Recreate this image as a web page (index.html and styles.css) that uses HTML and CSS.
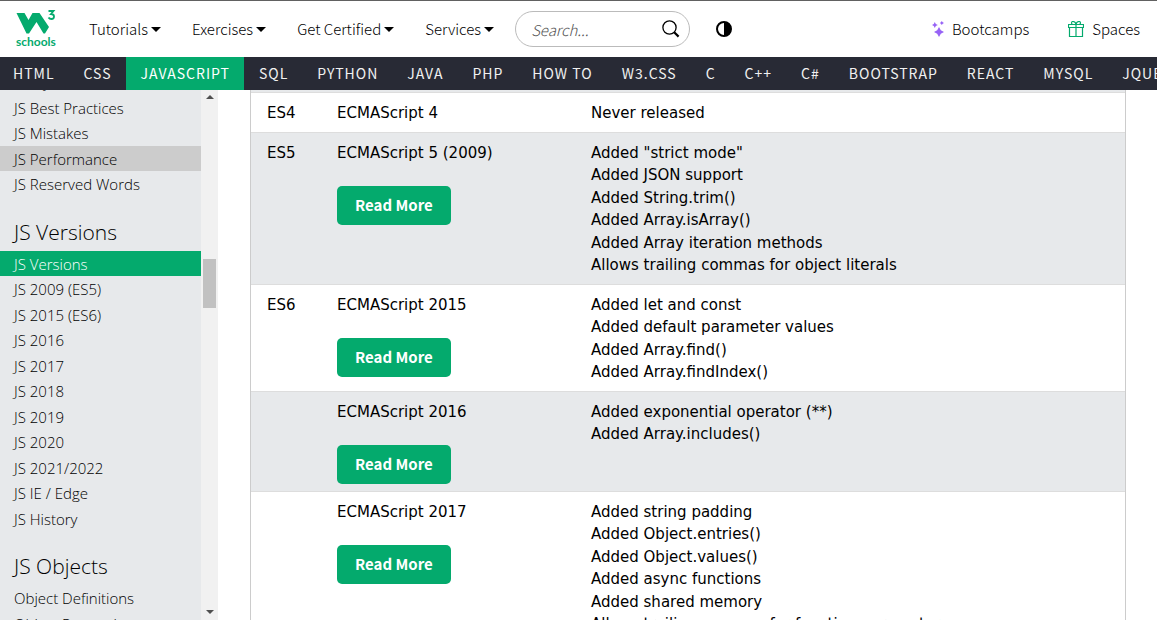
FILE: index.html
```html
<!DOCTYPE html>
<html lang="en">
<head>
<meta charset="utf-8">
<title>JavaScript Versions</title>
<link rel="stylesheet" href="styles.css">
</head>
<body>
<header class="topbar">
  <a class="logo" href="#" aria-label="W3Schools home">
    <svg width="40" height="38" viewBox="0 0 40 38" aria-hidden="true">
      <path d="M.5 3H8.500L12.500 10L16.500 3H23.500L33 17L29 23.500H27.500L20.500 12L13 23.500H10.500Z" fill="#04aa6d"/>
      <path d="M32.500 1H37.500L35 4Q38 4 38 6.500Q38 9 35.500 9Q33.500 9 32.500 7.500" fill="none" stroke="#04aa6d" stroke-width="1.8"/>
    </svg>
    <span class="logo-word">schools</span>
  </a>
  <nav class="menu" aria-label="Main">
    <a href="#">Tutorials<i class="caret"></i></a>
    <a href="#">Exercises<i class="caret"></i></a>
    <a href="#">Get Certified<i class="caret"></i></a>
    <a href="#">Services<i class="caret"></i></a>
  </nav>
  <form class="search">
    <input type="text" placeholder="Search..." aria-label="Search">
    <button type="button" aria-label="Search">
      <svg width="18" height="18" viewBox="0 0 18 18"><circle cx="7.5" cy="7.5" r="6.6" fill="none" stroke="#000" stroke-width="1.3"/><path d="M12.2 12.2L16.6 16.6" stroke="#000" stroke-width="2.2"/></svg>
    </button>
  </form>
  <button class="contrast" type="button" aria-label="Toggle dark mode">
    <svg width="16" height="16" viewBox="0 0 16 16"><circle cx="8" cy="8" r="7" fill="#fff" stroke="#000" stroke-width="2"/><path d="M8 1A7 7 0 0 1 8 15Z"/></svg>
  </button>
  <div class="extras">
    <a href="#"><svg width="12" height="16" viewBox="0 0 12 16" fill="#9763f6"><path d="M7 6L8.800 9.200L12 11L8.800 12.800L7 16L5.200 12.800L2 11L5.200 9.200Z"/><path d="M2.800 1L3.800 3L5.800 4L3.800 5L2.800 7L1.800 5L0 4L1.800 3Z"/><path d="M9.800 0L10.700 1.200L12 2L10.700 2.800L9.800 4L8.900 2.800L7.800 2L8.900 1.200Z"/></svg>Bootcamps</a>
    <a href="#"><svg width="16" height="16" viewBox="0 0 16 16" fill="none" stroke="#04aa6d" stroke-width="1.2"><path d="M.5 3.500H15.500V6.500H.5ZM1.500 6.500V15.500H14.500V6.500M8 3.500V15.500M8 3.500H5Q3.500 3.500 3.500 2T5 .5Q7.500 .5 8 3.500Q8.500 .5 11 .5Q12.500 .5 12.500 2T11 3.500"/></svg>Spaces</a>
  </div>
</header>
<nav class="topics" aria-label="Topics">
  <a href="#">HTML</a><a href="#">CSS</a><a class="active" href="#">JAVASCRIPT</a><a href="#">SQL</a><a href="#">PYTHON</a><a href="#">JAVA</a><a href="#">PHP</a><a href="#">HOW TO</a><a href="#">W3.CSS</a><a href="#">C</a><a href="#">C++</a><a href="#">C#</a><a href="#">BOOTSTRAP</a><a href="#">REACT</a><a href="#">MYSQL</a><a href="#">JQUERY</a>
</nav>
<div class="page">
  <aside class="sidebar">
    <nav class="chapters" aria-label="Chapters">
      <a href="#">JS Style Guide</a>
      <a href="#">JS Best Practices</a>
      <a href="#">JS Mistakes</a>
      <a class="hovered" href="#">JS Performance</a>
      <a href="#">JS Reserved Words</a>
      <h2>JS Versions</h2>
      <a class="active" href="#">JS Versions</a>
      <a href="#">JS 2009 (ES5)</a>
      <a href="#">JS 2015 (ES6)</a>
      <a href="#">JS 2016</a>
      <a href="#">JS 2017</a>
      <a href="#">JS 2018</a>
      <a href="#">JS 2019</a>
      <a href="#">JS 2020</a>
      <a href="#">JS 2021/2022</a>
      <a href="#">JS IE / Edge</a>
      <a href="#">JS History</a>
      <h2>JS Objects</h2>
      <a href="#">Object Definitions</a>
      <a href="#">Object Properties</a>
    </nav>
    <div class="scrollbar" aria-hidden="true">
      <i class="arrow-up"></i>
      <div class="track"><i class="thumb"></i></div>
      <i class="arrow-down"></i>
    </div>
  </aside>
  <main class="content">
    <table class="versions">
      <colgroup><col class="col-ver"><col class="col-name"><col></colgroup>
      <tbody>
      <tr class="cut"><td></td><td></td><td></td></tr>
      <tr><td>ES4</td><td>ECMAScript 4</td><td>Never released</td></tr>
      <tr><td>ES5</td><td>ECMAScript 5 (2009)<a class="more" href="#">Read More</a></td><td>Added "strict mode"<br>Added JSON support<br>Added String.trim()<br>Added Array.isArray()<br>Added Array iteration methods<br>Allows trailing commas for object literals</td></tr>
      <tr><td>ES6</td><td>ECMAScript 2015<a class="more" href="#">Read More</a></td><td>Added let and const<br>Added default parameter values<br>Added Array.find()<br>Added Array.findIndex()</td></tr>
      <tr><td></td><td>ECMAScript 2016<a class="more" href="#">Read More</a></td><td>Added exponential operator (**)<br>Added Array.includes()</td></tr>
      <tr><td></td><td>ECMAScript 2017<a class="more" href="#">Read More</a></td><td>Added string padding<br>Added Object.entries()<br>Added Object.values()<br>Added async functions<br>Added shared memory<br>Allows trailing commas for function parameters</td></tr>
      </tbody>
    </table>
  </main>
</div>
</body>
</html>
```

FILE: styles.css
```css
* { box-sizing: border-box; }

body {
  margin: 0;
  height: 100vh;
  overflow: hidden;
  display: flex;
  flex-direction: column;
  background: #fff;
  color: #000;
  font: 15px/1.5 "DejaVu Sans", sans-serif;
}

a { color: inherit; text-decoration: none; }
button { padding: 0; border: 0; background: none; }
svg { display: block; }

.topbar {
  flex: none;
  display: flex;
  align-items: center;
  height: 57px;
  padding: 0 17px 0 16px;
  border-top: 1px solid #616161;
  font-family: "Noto Sans CJK SC", sans-serif;
  font-size: 15px;
  font-weight: 300;
  white-space: nowrap;
}

.logo {
  position: relative;
  width: 40px;
  height: 38px;
  color: #04aa6d;
}
.logo-word {
  position: absolute;
  left: 0;
  bottom: 0;
  font: bold 12px/12px Lato, sans-serif;
}

.menu { display: flex; gap: 31px; margin: 0 21px 0 33px; }
.menu a { display: flex; align-items: center; gap: 3px; }
.caret {
  border: 5px solid transparent;
  border-top-color: #000;
  border-bottom: 0;
}

.search {
  display: flex;
  align-items: center;
  width: 175px;
  height: 36px;
  padding: 0 9px 0 15px;
  border: 1px solid #bbb;
  border-radius: 18px;
}
.search input {
  flex: 1;
  min-width: 0;
  padding: 0;
  border: 0;
  outline: 0;
  background: none;
  font: italic 300 15px "Noto Sans CJK SC", sans-serif;
}
.search input::placeholder { color: #555; }

.contrast { margin-left: 26px; }

.extras { display: flex; gap: 39px; margin-left: auto; }
.extras a { display: flex; align-items: center; gap: 8px; }

.topics {
  flex: none;
  display: flex;
  height: 33px;
  overflow: hidden;
  background: #282a35;
  color: #f1f1f1;
  font: 400 14px/32px "Noto Sans CJK SC", sans-serif;
  letter-spacing: 1px;
  white-space: nowrap;
}
.topics a { flex: none; padding: 0 14px 0 15px; }
.topics a:first-child { padding-left: 13px; }
.topics .active { background: #04aa6d; color: #fff; }

.page { flex: 1; min-height: 0; display: flex; }

.sidebar {
  flex: none;
  display: flex;
  width: 218px;
  overflow: hidden;
  background: #e7e9eb;
}
.chapters {
  flex: 1;
  margin-top: -21px;
  font-family: "Open Sans", sans-serif;
  font-weight: 300;
  white-space: nowrap;
}
.chapters a {
  display: block;
  padding: 2px 0 1px 14px;
}
.chapters h2 {
  margin: 20px 0 0;
  padding: 0 0 4px 14px;
  font-size: 21px;
  font-weight: 300;
  line-height: 30px;
}
.chapters .hovered { background: #ccc; }
.chapters .active { background: #04aa6d; color: #fff; }

.scrollbar {
  display: flex;
  flex-direction: column;
  align-items: center;
  width: 17px;
  padding: 5px 0 6px;
  background: #f1f1f1;
}
.arrow-up, .arrow-down { border: 4px solid transparent; }
.arrow-up { border-top: 0; border-bottom-color: #505050; }
.arrow-down { border-bottom: 0; border-top-color: #505050; }
.track { flex: 1; padding-top: 160px; }
.thumb { display: block; width: 13px; height: 49px; background: #c1c1c1; }

.content { flex: 1; min-width: 0; padding: 0 31px 0 32px; }

.versions {
  width: 100%;
  table-layout: fixed;
  border: 1px solid #ccc;
  border-top: 0;
  border-spacing: 0;
}
.col-ver { width: 78px; }
.col-name { width: 254px; }
.versions td {
  padding: 9px 8px 7px;
  border-bottom: 1px solid #ddd;
  vertical-align: top;
}
.versions td:first-child { padding-left: 16px; }
.versions .cut td { height: 3px; padding: 0; }
.versions tr:nth-child(odd) { background: #e7e9eb; }
.more {
  display: block;
  width: fit-content;
  margin-top: 22px;
  padding: 8px 18px;
  border-radius: 5px;
  background: #04aa6d;
  color: #fff;
  font-family: "Noto Sans CJK SC", sans-serif;
  font-weight: 700;
}
```
